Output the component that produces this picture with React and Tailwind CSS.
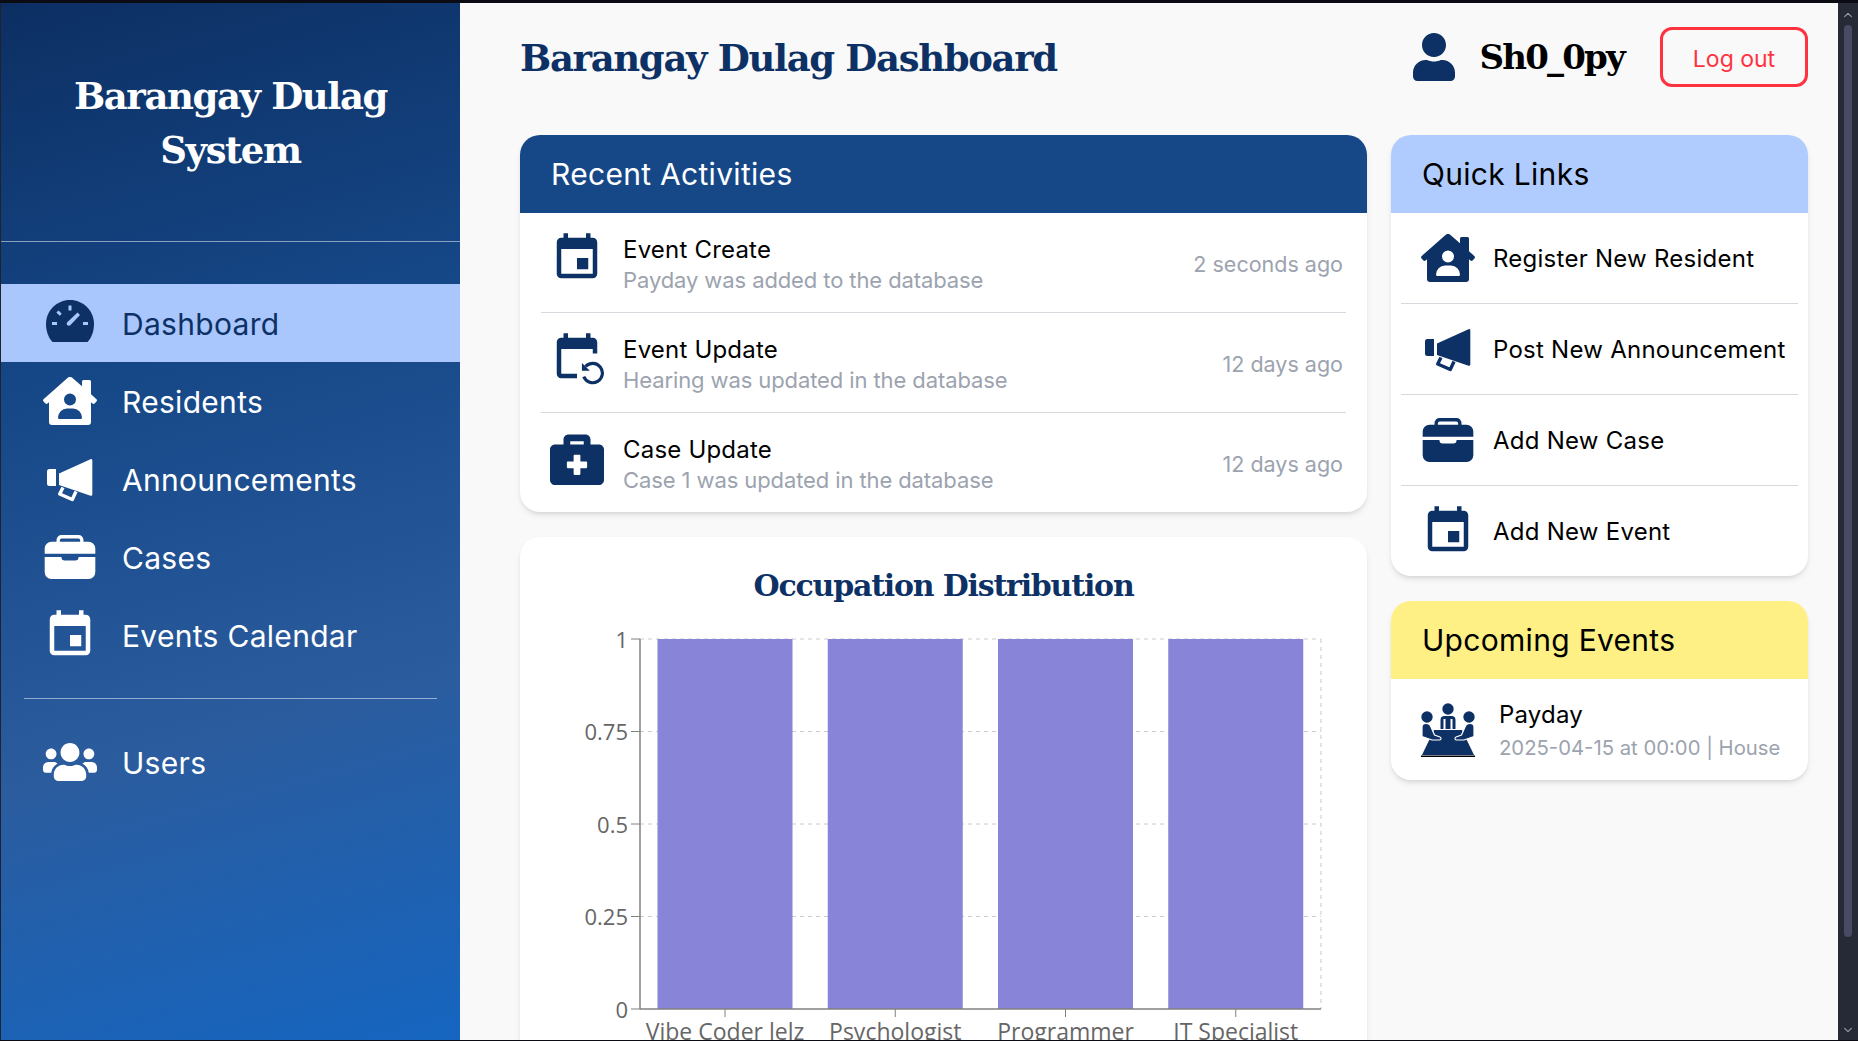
import React from 'react';
import { FaHouseUser, FaUsers, FaBriefcaseMedical, FaUser } from 'react-icons/fa';
import { IoBriefcase, IoChevronUp, IoChevronDown } from 'react-icons/io5';
import { MdEvent } from 'react-icons/md';

const Gauge = () => (
    <svg viewBox="0 0 48 42" width="48" height="42" className="mb-[4px]">
        <path d="M6.500 42C2.400 37.800 0 31.200 0 24 0 10.700 10.700 0 24 0s24 10.700 24 24c0 7.200-2.400 13.800-6.500 18z" fill="#0d3165" />
        <g stroke="#a9c6fd" strokeWidth="3" strokeLinecap="square">
            <path d="M24 7v2M12.500 12.500l1.200 1.200M7.500 23.500h2M38.500 23.500h2" />
        </g>
        <path d="m21.500 22 10-9.500 2.500 2.500-9.500 10c-1 1-2.500 1-3.300 0s-.7-2 .3-3z" fill="#a9c6fd" />
    </svg>
);

const Megaphone = ({ className }) => (
    <svg viewBox="0 0 54 48" width="54" height="48" className={className} fill="currentColor">
        <path d="M6.500 14H13v17H6.500A2.500 2.500 0 0 1 4 28.500v-12A2.500 2.500 0 0 1 6.500 14z" />
        <path d="M16 18.500 47.500 4.200c.9-.4 1.800.3 1.800 1.200v34c0 .9-.8 1.500-1.700 1.300L16 30z" />
        <path d="m20 32.500-3.300 6.500 12.600 5.500 3.700-8" fill="none" stroke="currentColor" strokeWidth="3.400" strokeLinejoin="round" />
    </svg>
);

const EventRestore = ({ className }) => (
    <svg viewBox="0 0 24 24" width="54" height="54" className={className} fill="currentColor">
        <path d="M16 1v2H8V1H6v2H5c-1.110 0-1.990.9-1.990 2L3 19c0 1.100.89 2 2 2h7v-2H5V8h14v2h2V5c0-1.100-.9-2-2-2h-1V1h-2z" />
        <path d="M15.800 15.800A4.300 4.300 0 1 1 15 20.300" fill="none" stroke="currentColor" strokeWidth="1.400" />
        <path d="M14.200 14.200v3.500h3.500z" />
    </svg>
);

const Meeting = ({ className }) => (
    <svg viewBox="0 0 54 54" width="54" height="54" className={className} fill="currentColor">
        <circle cx="27" cy="6" r="5.700" />
        <circle cx="6" cy="14" r="5.700" />
        <circle cx="48" cy="14" r="5.700" />
        <path d="M19.500 26v-9a4 4 0 0 1 4-4h7a4 4 0 0 1 4 4v9h-3v-10h-9v10z" />
        <path d="M24.500 16h5v10h-5z" />
        <path d="M13 27h28l12 25H1z" />
        <path d="M1 24c0-2.500 1.500-3.500 4-3.500s4 1 5 3.500l3.500 8 5.500 2c1.800 1 1.200 3-.8 3H11L1 33.500z" stroke="#ffffff" strokeWidth="1.200" />
        <path d="M53 24c0-2.500-1.500-3.500-4-3.500s-4 1-5 3.500l-3.500 8-5.500 2c-1.800 1-1.200 3 .8 3H43l10-3.500z" stroke="#ffffff" strokeWidth="1.200" />
        <path d="M0 52.500h54V54H0z" fill="#000000" />
    </svg>
);

const navItems = [
    { label: 'Dashboard', icon: <Gauge />, active: true },
    { label: 'Residents', icon: <FaHouseUser size={54} /> },
    { label: 'Announcements', icon: <Megaphone /> },
    { label: 'Cases', icon: <IoBriefcase size={54} /> },
    { label: 'Events Calendar', icon: <MdEvent size={54} /> },
];

const activities = [
    { title: 'Event Create', text: 'Payday was added to the database', time: '2 seconds ago', icon: <MdEvent size={54} />, rowClass: 'h-[100px] border-b border-[#d8d8de]' },
    { title: 'Event Update', text: 'Hearing was updated in the database', time: '12 days ago', icon: <EventRestore />, rowClass: 'h-[100px] border-b border-[#d8d8de]' },
    { title: 'Case Update', text: 'Case 1 was updated in the database', time: '12 days ago', icon: <FaBriefcaseMedical size={54} />, rowClass: 'h-[99px]' },
];

const quickLinks = [
    { label: 'Register New Resident', icon: <FaHouseUser size={54} />, rowClass: 'h-[91px] border-b border-[#d8d8de]' },
    { label: 'Post New Announcement', icon: <Megaphone />, rowClass: 'h-[91px] border-b border-[#d8d8de]' },
    { label: 'Add New Case', icon: <IoBriefcase size={54} />, rowClass: 'h-[91px] border-b border-[#d8d8de]' },
    { label: 'Add New Event', icon: <MdEvent size={54} />, rowClass: 'h-[90px]' },
];

const NavRow = ({ item }) => (
    <div className={`flex h-[78px] items-center gap-[25px] pl-[42px] text-[30px] tracking-[0.3px] ${item.active ? 'bg-[#a9c6fd] text-[#0d3165]' : 'text-white'}`}>
        <span className="flex w-[54px] justify-center">{item.icon}</span>
        <span className="pt-[2px]">{item.label}</span>
    </div>
);

const OccupationChart = () => {
    const bands = ['Vibe Coder lelz', 'Psychologist', 'Programmer', 'IT Specialist'];
    const yTicks = [
        { label: '1', y: 29 },
        { label: '0.75', y: 121.5 },
        { label: '0.5', y: 214 },
        { label: '0.25', y: 306.5 },
        { label: '0', y: 399 },
    ];
    return (
        <svg width="846" height="440" viewBox="0 0 846 440" className="block">
            {yTicks.slice(0, 4).map((t) => (
                <line key={t.label} x1="120" x2="801" y1={t.y} y2={t.y} stroke="#cccccc" strokeDasharray="4 4" />
            ))}
            <line x1="801" x2="801" y1="29" y2="399" stroke="#cccccc" strokeDasharray="4 4" />
            {bands.map((b, i) => (
                <rect key={b} x={137.5 + 170.25 * i} y="29" width="135" height="370" fill="#8884d8" />
            ))}
            <line x1="120" x2="120" y1="29" y2="399" stroke="#808080" strokeWidth="1.500" />
            <line x1="120" x2="801" y1="399" y2="399" stroke="#808080" strokeWidth="1.500" />
            {yTicks.map((t) => (
                <g key={t.label}>
                    <line x1="111" x2="120" y1={t.y} y2={t.y} stroke="#808080" />
                    <text x="108" y={t.y + 8.500} textAnchor="end" fontSize="22" fill="#666666">{t.label}</text>
                </g>
            ))}
            {bands.map((b, i) => (
                <g key={b}>
                    <line x1={205 + 170.25 * i} x2={205 + 170.25 * i} y1="399" y2="407" stroke="#808080" />
                    <text x={205 + 170.25 * i} y="430" textAnchor="middle" fontSize="23" fill="#666666">{b}</text>
                </g>
            ))}
        </svg>
    );
};

const App = () => {
    return (
        <div className="flex h-screen flex-col overflow-hidden bg-[#0b0b14] font-['Inter',sans-serif]">
            <div className="h-[3px] shrink-0 bg-[#0b0b14]" />
            <div className="flex min-h-0 flex-1 border-l border-[#1f2330]">
                {/* Sidebar */}
                <aside className="w-[459px] shrink-0 bg-[linear-gradient(165deg,#0c2f63_0%,#164888_35%,#2b5c9e_68%,#1565c0_100%)]">
                    <div className="flex h-[239px] items-center justify-center border-b border-white/50 px-8 pt-[2px] text-center font-['DejaVu_Serif',serif] text-[37px] leading-[54px] font-bold tracking-[-1.4px] text-white">
                        Barangay Dulag<br />System
                    </div>
                    <nav className="mt-[42px]">
                        {navItems.map((item) => <NavRow key={item.label} item={item} />)}
                    </nav>
                    <div className="mx-[23px] my-[24px] border-t border-white/50" />
                    <NavRow item={{ label: 'Users', icon: <FaUsers size={54} /> }} />
                </aside>

                {/* Main */}
                <main className="min-w-0 flex-1 overflow-hidden bg-[#f9f9f9] pt-6 pr-[30px] pl-[60px]">
                    <header className="mb-12 flex h-[60px] items-center">
                        <h1 className="flex-1 pt-[4px] font-['DejaVu_Serif',serif] text-[37px] font-bold tracking-[-1.35px] text-[#0d3165]">Barangay Dulag Dashboard</h1>
                        <FaUser size={48} className="text-[#0d3165]" />
                        <span className="mr-9 ml-[21px] font-['DejaVu_Serif',serif] text-[34px] font-bold tracking-[-1.8px] text-black">Sh0_0py</span>
                        <button className="h-[60px] w-[148px] rounded-[12px] border-[3px] border-[#ff3340] pt-[5px] text-[23px] text-[#ff3340]">Log out</button>
                    </header>

                    <div className="flex gap-6">
                        <div className="flex w-[847px] flex-col gap-[25px]">
                            {/* Recent Activities */}
                            <section className="overflow-hidden rounded-[20px] bg-white shadow-md">
                                <h2 className="flex h-[78px] items-center bg-[#164888] pt-[1px] pl-[31px] text-[30px] tracking-[0.3px] text-white">Recent Activities</h2>
                                {activities.map((a) => (
                                    <div key={a.title} className={`mx-[21px] flex items-center gap-[19px] pr-[3px] pl-[9px] ${a.rowClass}`}>
                                        <span className="flex w-[54px] justify-center pb-[10px] text-[#0d3165]">{a.icon}</span>
                                        <div className="flex-1 pt-[5px]">
                                            <div className="text-[24px] leading-[30px] tracking-[0.2px] text-black">{a.title}</div>
                                            <div className="text-[22px] leading-[30px] tracking-[-0.1px] text-[#9ca3af]">{a.text}</div>
                                        </div>
                                        <span className="pt-[3px] text-[21.5px] text-[#9ca3af]">{a.time}</span>
                                    </div>
                                ))}
                            </section>

                            {/* Occupation Distribution */}
                            <section className="h-[600px] rounded-[20px] bg-white pt-[25px] shadow-md">
                                <h2 className="text-center font-['DejaVu_Serif',serif] text-[30px] leading-[48px] font-bold tracking-[-1.2px] text-[#0d3165]">Occupation Distribution</h2>
                                <div className="font-['Open_Sans',sans-serif]">
                                    <OccupationChart />
                                </div>
                            </section>
                        </div>

                        <div className="flex w-[417px] flex-col gap-[25px]">
                            {/* Quick Links */}
                            <section className="overflow-hidden rounded-[20px] bg-white shadow-md">
                                <h2 className="flex h-[78px] items-center bg-[#b0ccff] pt-[1px] pl-[31px] text-[30px] tracking-[0.3px] text-black">Quick Links</h2>
                                {quickLinks.map((l) => (
                                    <div key={l.label} className={`mx-[10px] flex items-center gap-[18px] pl-5 ${l.rowClass}`}>
                                        <span className="flex w-[54px] justify-center text-[#0d3165]">{l.icon}</span>
                                        <span className="pt-[2px] text-[24px] tracking-[0.25px] whitespace-nowrap text-black">{l.label}</span>
                                    </div>
                                ))}
                            </section>

                            {/* Upcoming Events */}
                            <section className="overflow-hidden rounded-[20px] bg-white shadow-md">
                                <h2 className="flex h-[78px] items-center bg-[#fef084] pt-[1px] pl-[31px] text-[30px] tracking-[0.3px] text-black">Upcoming Events</h2>
                                <div className="flex h-[101px] items-center gap-[24px] pl-[30px]">
                                    <Meeting className="text-[#0d3165]" />
                                    <div className="pt-[2px]">
                                        <div className="text-[24px] leading-[33px] tracking-[0.2px] text-black">Payday</div>
                                        <div className="text-[20.3px] leading-[33px] whitespace-nowrap text-[#9ca3af]">2025-04-15 at 00:00 | House</div>
                                    </div>
                                </div>
                            </section>
                        </div>
                    </div>
                </main>

                {/* Window scrollbar */}
                <div className="flex w-5 shrink-0 flex-col items-center bg-[#262a37] pt-[6px] pb-[4px] text-[#9a9cab]">
                    <IoChevronUp size={12} />
                    <div className="mt-[4px] h-[912px] w-2 rounded-full bg-[#4a4a64]" />
                    <div className="flex-1" />
                    <IoChevronDown size={12} />
                </div>
            </div>
            <div className="h-px shrink-0 bg-[#0b0b14]" />
        </div>
    );
};

export default App;
